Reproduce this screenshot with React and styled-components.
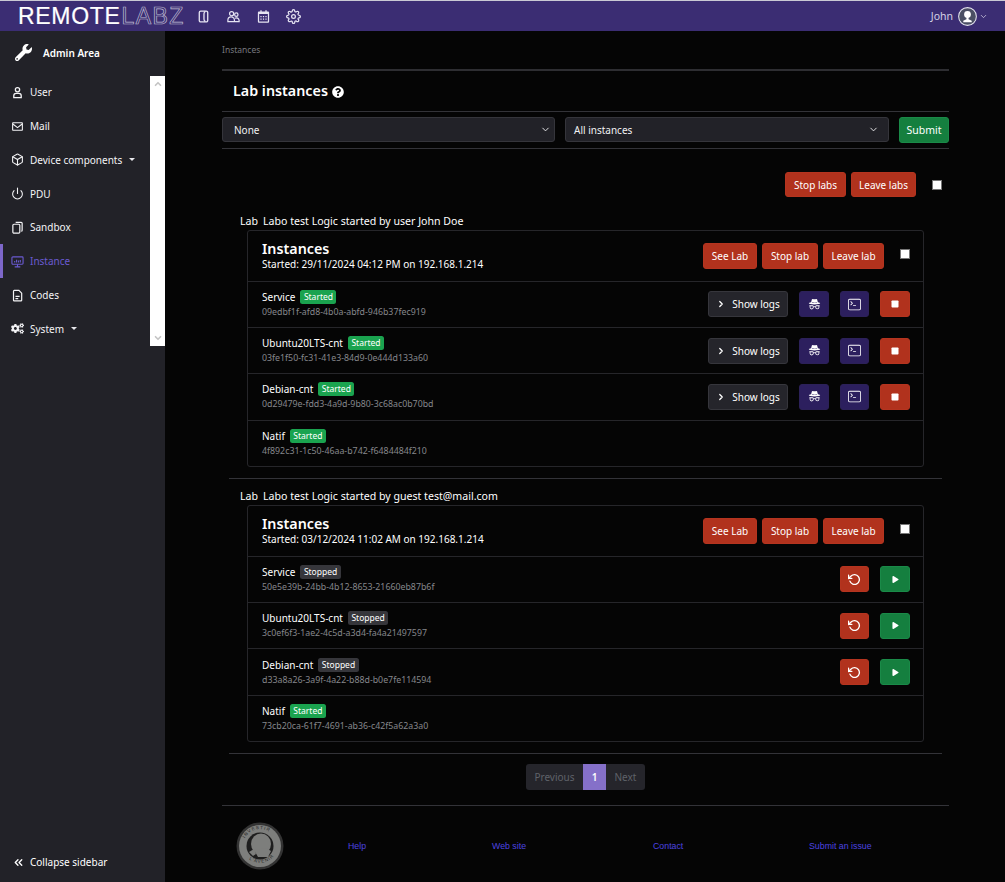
import React from "react";
import styled, { createGlobalStyle } from "styled-components";
import { BiEnvelope, BiCalendar } from "react-icons/bi";
import { FaWrench, FaQuestionCircle, FaStop, FaPlay, FaCogs } from "react-icons/fa";
import { FiChevronDown, FiChevronRight, FiChevronUp, FiChevronsLeft, FiRotateCcw, FiSettings, FiBox, FiPower } from "react-icons/fi";
import { BsIncognito, BsTerminal } from "react-icons/bs";

const GlobalStyle = createGlobalStyle`
  html, body { margin: 0; padding: 0; background: #050505; }
  body { font-family: "Noto Sans", "Open Sans", sans-serif; color: #fff; font-size: 10px; }
  * { box-sizing: border-box; }
`;

const Page = styled.div`
  width: 1005px;
  height: 882px;
  display: flex;
  flex-direction: column;
  overflow: hidden;
`;

const TopBar = styled.header`
  height: 31px;
  flex: none;
  background: #3b2d73;
  border-top: 1px solid #c9c9d4;
  display: flex;
  align-items: center;
  padding: 0 17px 0 18px;
`;

const Logo = styled.div`
  font-family: "Liberation Sans", sans-serif;
  font-size: 23px;
  line-height: 1;
  width: 164px;
  letter-spacing: 0.7px;
  white-space: nowrap;
  color: #fff;
  -webkit-text-stroke: 0.2px #fff;
`;

const LogoOutline = styled.span`
  color: transparent;
  -webkit-text-stroke: 0.7px #bdbad2;
  letter-spacing: 1.4px;
  margin-left: 1px;
`;

const TopIcons = styled.div`
  display: flex;
  align-items: center;
  gap: 15px;
  margin-left: 14px;
  color: #e6e4f2;
  font-size: 15px;
  svg { display: block; }
`;

const UserMenu = styled.div`
  margin-left: auto;
  display: flex;
  align-items: center;
  gap: 5px;
  font-size: 10.5px;
  color: #d5d2e6;
  svg:last-child { margin-left: -3px; }
`;

const Body = styled.div`
  flex: 1;
  display: flex;
  min-height: 0;
`;

const Sidebar = styled.aside`
  width: 165px;
  flex: none;
  background: #222228;
  display: flex;
  flex-direction: column;
`;

const AdminHead = styled.div`
  height: 45px;
  display: flex;
  align-items: center;
  gap: 11px;
  padding: 0 0 2px 15px;
  font-size: 10px;
  font-weight: 600;
  svg { font-size: 17px; }
`;

const NavWrap = styled.div`
  display: flex;
  height: 270px;
`;

const NavList = styled.nav`
  width: 150px;
  margin-top: -0.6px;
`;

const NavItem = styled.div`
  height: 33.8px;
  display: flex;
  align-items: center;
  gap: 6px;
  padding-left: ${(p) => (p.$active ? "8px" : "11px")};
  border-left: ${(p) => (p.$active ? "3px solid #7d67c9" : "none")};
  font-size: 10px;
  color: ${(p) => (p.$active ? "#6a5ad0" : "#f4f4f6")};
  svg { width: 13px; height: 13px; flex: none; }
`;

const Caret = styled.span`
  width: 0;
  height: 0;
  margin-left: 1px;
  border-left: 3px solid transparent;
  border-right: 3px solid transparent;
  border-top: 3px solid #e8e8ec;
`;

const ScrollTrack = styled.div`
  width: 15px;
  background: #fff;
  color: #c4c4c4;
  display: flex;
  flex-direction: column;
  justify-content: space-between;
  align-items: center;
  padding: 3px 0;
  font-size: 10px;
  svg { stroke-width: 4; }
`;

const Collapse = styled.div`
  margin-top: auto;
  height: 40px;
  display: flex;
  align-items: center;
  gap: 5px;
  padding-left: 12px;
  font-size: 10px;
  svg { font-size: 13px; stroke-width: 2.5; }
`;

const Main = styled.main`
  flex: 1;
  padding: 0 56px 0 57px;
  display: flex;
  flex-direction: column;
`;

const Crumb = styled.div`
  height: 40px;
  padding-top: 12px;
  font-size: 8.5px;
  line-height: 14px;
  color: #77797f;
  border-bottom: 2px solid #2e2e32;
`;

const Title = styled.h1`
  margin: 0;
  height: 41px;
  padding: 0 0 2px 11px;
  display: flex;
  align-items: center;
  gap: 4px;
  font-size: 14.3px;
  font-weight: 600;
  border-bottom: 1px solid #333338;
  svg { font-size: 12px; margin-top: 4px; }
`;

const FilterRow = styled.form`
  height: 37px;
  display: flex;
  align-items: center;
  gap: 10px;
  padding-bottom: 1px;
  border-bottom: 1px solid #333338;
`;

const Select = styled.div`
  width: ${(p) => p.$w}px;
  height: 25px;
  background: #222228;
  border: 1px solid #35353b;
  border-radius: 3px;
  display: flex;
  align-items: center;
  justify-content: space-between;
  padding: 0 ${(p) => p.$end}px 0 ${(p) => p.$pad}px;
  font-size: 10px;
  color: #f1f1f3;
`;

const Btn = styled.button`
  font-family: inherit;
  height: ${(p) => p.$h || 26}px;
  padding: 0;
  width: ${(p) => p.$w}px;
  font-size: ${(p) => p.$fs || 10}px;
  color: #fff;
  border-radius: 3px;
  border: 1px solid ${(p) => ({ red: "#b5341f", green: "#1a8a48", purple: "#2c2159", dark: "#36363c" }[p.$kind])};
  background: ${(p) => ({ red: "#b1321d", green: "#157f3f", purple: "#2c1f5e", dark: "#25252b" }[p.$kind])};
  display: flex;
  align-items: center;
  justify-content: center;
  gap: 6px;
  white-space: nowrap;
`;

const Check = styled.span`
  width: 10px;
  height: 10px;
  background: #fff;
  border: 1px solid #777;
  flex: none;
  display: block;
`;

const BulkRow = styled.div`
  margin-top: 23px;
  display: flex;
  justify-content: flex-end;
  align-items: center;
  padding-right: 7px;
  gap: 5px;
`;

const BulkCheck = styled(Check)`
  margin-left: 11px;
`;

const LabBlock = styled.section`
  margin: ${(p) => p.$top}px 7px 0;
  padding-bottom: 11px;
  border-bottom: 1px solid #333338;
`;

const LabName = styled.div`
  padding-left: 11px;
  height: 15px;
  line-height: 15px;
  font-size: 10.6px;
  white-space: nowrap;
  span { margin-right: 5px; }
`;

const Card = styled.div`
  margin: 1px 18px 0;
  border: 1px solid #26262a;
  border-radius: 3px;
`;

const CardHead = styled.div`
  height: 49.5px;
  display: flex;
  align-items: center;
  justify-content: space-between;
  padding: 0 13px 0 14px;
`;

const CardTitle = styled.div`
  font-size: 14.3px;
  line-height: 17px;
  font-weight: 600;
`;

const CardSub = styled.div`
  font-size: 10px;
  line-height: 15px;
`;

const HeadActions = styled.div`
  display: flex;
  align-items: center;
  gap: 5px;
  ${Check} { margin-left: 11px; margin-top: -3px; }
`;

const Row = styled.div`
  height: 46.4px;
  border-top: 1px solid #26262a;
  display: flex;
  align-items: center;
  justify-content: space-between;
  padding: 0 13px 0 14px;
`;

const RowName = styled.div`
  display: flex;
  align-items: center;
  gap: 5px;
  font-size: 10px;
  line-height: 14px;
`;

const Badge = styled.span`
  font-size: 8.5px;
  line-height: 13px;
  height: 14px;
  padding: 0 3.5px;
  border-radius: 2.5px;
  background: ${(p) => (p.$on ? "#1aa34f" : "#36363b")};
  color: #fff;
`;

const Uuid = styled.div`
  font-size: 8.8px;
  line-height: 13px;
  color: #85878c;
  margin-top: 2px;
`;

const RowActions = styled.div`
  display: flex;
  gap: 11px;
  align-items: center;
  svg { display: block; }
`;

const Pager = styled.div`
  margin: 10px auto 0;
  display: flex;
  height: 26px;
  width: 119px;
  border-radius: 3px;
  overflow: hidden;
  background: #25252b;
  font-size: 10px;
`;

const PageCell = styled.div`
  display: flex;
  align-items: center;
  justify-content: center;
  width: ${(p) => p.$w}px;
  color: ${(p) => (p.$active ? "#fff" : "#5f6269")};
  background: ${(p) => (p.$active ? "#8570c9" : "transparent")};
  font-weight: ${(p) => (p.$active ? 600 : 400)};
`;

const Footer = styled.footer`
  margin-top: 15px;
  border-top: 1px solid #333338;
  flex: 1;
  display: grid;
  grid-template-columns: 126px 144px 161px 156px auto;
  align-items: center;
  font-family: "Liberation Sans", sans-serif;
  font-size: 8.8px;
  color: #4c44e0;
  padding-top: 3px;
`;

const Medal = styled.svg`
  margin-left: 14px;
  display: block;
`;

const Door = () => (
  <svg width="15" height="15" viewBox="0 0 16 16" fill="none" stroke="currentColor" strokeWidth="1.4">
    <path d="M5 2.2h6a1.5 1.5 0 0 1 1.5 1.5v8.6a1.5 1.5 0 0 1-1.5 1.5H5a1.5 1.5 0 0 1-1.5-1.5V3.7A1.5 1.5 0 0 1 5 2.2z" />
    <path d="M10 2.5c-1 .8-1.5 1.5-1.5 2.5v6c0 1 .5 1.800 1.500 2.500" />
  </svg>
);

const People = () => (
  <svg width="15" height="15" viewBox="0 0 16 16" fill="none" stroke="currentColor" strokeWidth="1.3">
    <circle cx="6" cy="5" r="2.2" />
    <circle cx="11" cy="6" r="1.8" />
    <path d="M2 13.5v-1.5a3.5 3.5 0 0 1 7 0v1.5zM9.5 13.5H14v-1.3a3 3 0 0 0-4.5-2.4" />
  </svg>
);

const Avatar = () => (
  <svg width="19" height="19" viewBox="0 0 18 18">
    <circle cx="9" cy="9" r="8.4" fill="#4a4f63" stroke="#e4e4ee" strokeWidth="1" />
    <circle cx="9" cy="7" r="3.2" fill="#fff" />
    <path d="M8 9.5h2v2l3 1.6v1.4H5v-1.4l3-1.6z" fill="#fff" />
  </svg>
);

const PersonIcon = () => (
  <svg viewBox="0 0 14 14" fill="none" stroke="currentColor" strokeWidth="1.4">
    <circle cx="7" cy="4" r="2.3" />
    <path d="M3 12.5v-2A2.5 2.5 0 0 1 5.5 8h3a2.5 2.5 0 0 1 2.5 2.5v2z" />
  </svg>
);

const CopyIcon = () => (
  <svg viewBox="0 0 14 14" fill="none" stroke="currentColor" strokeWidth="1.3">
    <path d="M5 1.5h6a1 1 0 0 1 1 1V10a1 1 0 0 1-1 1" />
    <rect x="2" y="3.5" width="7.5" height="9.500" rx="1.2" />
  </svg>
);

const ScreenIcon = () => (
  <svg viewBox="0 0 14 14" fill="none" stroke="currentColor" strokeWidth="1.2">
    <rect x="1" y="2" width="12" height="8" rx="1" />
    <path d="M7 10v2.5M4 12.800h6M4 8V6.5M6 8V5M8 8V6M10 8V5.5" />
  </svg>
);

const FileIcon = () => (
  <svg viewBox="0 0 14 14" fill="none" stroke="currentColor" strokeWidth="1.3">
    <path d="M3.5 1.5h5l3 3V12a.8.8 0 0 1-.8.8H3.5a.8.8 0 0 1-.8-.8V2.3a.8.8 0 0 1 .8-.8z" />
    <path d="M4.8 8h4.5M4.8 10.3h3" />
  </svg>
);

const MedalIcon = () => (
  <Medal width="48" height="48" viewBox="0 0 48 48">
    <circle cx="24" cy="24" r="23.5" fill="#333" />
    <circle cx="24" cy="24" r="21" fill="#7d7e7c" />
    <circle cx="24" cy="24" r="13.5" fill="#1e1e1e" />
    <ellipse cx="25" cy="22" rx="10" ry="10.500" fill="#7d7e7c" />
    <path d="M18 28l12-2 5 3-3 6H22z" fill="#7d7e7c" />
    <path d="M13 30l5-3 2 5-3 2z" fill="#7d7e7c" />
    <path id="medal-top" d="M7 24a17 17 0 0 1 34 0" fill="none" />
    <path id="medal-bottom" d="M8 31a18 18 0 0 0 32 0" fill="none" />
    <text fontSize="4.5" fill="#262626" fontFamily="Liberation Sans" letterSpacing="1">
      <textPath href="#medal-top" startOffset="8">INVESTIR</textPath>
    </text>
    <text fontSize="4.5" fill="#262626" fontFamily="Liberation Sans" letterSpacing="1">
      <textPath href="#medal-bottom" startOffset="8">L'AVENIR</textPath>
    </text>
  </Medal>
);

const navItems = [
  { icon: <PersonIcon />, label: "User" },
  { icon: <BiEnvelope />, label: "Mail" },
  { icon: <FiBox />, label: "Device components", caret: true },
  { icon: <FiPower />, label: "PDU" },
  { icon: <CopyIcon />, label: "Sandbox" },
  { icon: <ScreenIcon />, label: "Instance", active: true },
  { icon: <FileIcon />, label: "Codes" },
  { icon: <FaCogs />, label: "System", caret: true },
];

const labs = [
  {
    top: 17,
    owner: "Labo test Logic started by user John Doe",
    started: "Started: 29/11/2024 04:12 PM on 192.168.1.214",
    rows: [
      { name: "Service", id: "09edbf1f-afd8-4b0a-abfd-946b37fec919", on: true, mode: "running" },
      { name: "Ubuntu20LTS-cnt", id: "03fe1f50-fc31-41e3-84d9-0e444d133a60", on: true, mode: "running" },
      { name: "Debian-cnt", id: "0d29479e-fdd3-4a9d-9b80-3c68ac0b70bd", on: true, mode: "running" },
      { name: "Natif", id: "4f892c31-1c50-46aa-b742-f6484484f210", on: true },
    ],
  },
  {
    top: 10,
    owner: "Labo test Logic started by guest test@mail.com",
    started: "Started: 03/12/2024 11:02 AM on 192.168.1.214",
    rows: [
      { name: "Service", id: "50e5e39b-24bb-4b12-8653-21660eb87b6f", mode: "stopped" },
      { name: "Ubuntu20LTS-cnt", id: "3c0ef6f3-1ae2-4c5d-a3d4-fa4a21497597", mode: "stopped" },
      { name: "Debian-cnt", id: "d33a8a26-3a9f-4a22-b88d-b0e7fe114594", mode: "stopped" },
      { name: "Natif", id: "73cb20ca-61f7-4691-ab36-c42f5a62a3a0", on: true },
    ],
  },
];

const RowButtons = ({ mode }) => {
  if (mode === "running") {
    return (
      <RowActions>
        <Btn $kind="dark" $w={80}><FiChevronRight size={10} strokeWidth={3} />Show logs</Btn>
        <Btn $kind="purple" $w={30}><BsIncognito size={13} /></Btn>
        <Btn $kind="purple" $w={29}><BsTerminal size={13} /></Btn>
        <Btn $kind="red" $w={30}><FaStop size={8} /></Btn>
      </RowActions>
    );
  }
  if (mode === "stopped") {
    return (
      <RowActions>
        <Btn $kind="red" $w={29}><FiRotateCcw size={13} strokeWidth={2.5} /></Btn>
        <Btn $kind="green" $w={30}><FaPlay size={7} /></Btn>
      </RowActions>
    );
  }
  return null;
};

export default function App() {
  return (
    <Page>
      <GlobalStyle />
      <TopBar>
        <Logo>REMOTE<LogoOutline>LABZ</LogoOutline></Logo>
        <TopIcons>
          <Door />
          <People />
          <BiCalendar />
          <FiSettings />
        </TopIcons>
        <UserMenu>
          John
          <Avatar />
          <FiChevronDown size={9} />
        </UserMenu>
      </TopBar>
      <Body>
        <Sidebar>
          <AdminHead><FaWrench />Admin Area</AdminHead>
          <NavWrap>
            <NavList>
              {navItems.map((item) => (
                <NavItem key={item.label} $active={item.active}>
                  {item.icon}
                  {item.label}
                  {item.caret && <Caret />}
                </NavItem>
              ))}
            </NavList>
            <ScrollTrack><FiChevronUp /><FiChevronDown /></ScrollTrack>
          </NavWrap>
          <Collapse><FiChevronsLeft />Collapse sidebar</Collapse>
        </Sidebar>
        <Main>
          <Crumb>Instances</Crumb>
          <Title>Lab instances <FaQuestionCircle /></Title>
          <FilterRow>
            <Select $w={333} $pad={11} $end={3}>None<FiChevronDown size={11} /></Select>
            <Select $w={324} $pad={8} $end={9}>All instances<FiChevronDown size={11} /></Select>
            <Btn $kind="green" $w={50} $fs={10.5}>Submit</Btn>
          </FilterRow>
          <BulkRow>
            <Btn $kind="red" $w={61} $h={25}>Stop labs</Btn>
            <Btn $kind="red" $w={65} $h={25}>Leave labs</Btn>
            <BulkCheck />
          </BulkRow>
          {labs.map((lab) => (
            <LabBlock key={lab.started} $top={lab.top}>
              <LabName><span>Lab</span>{lab.owner}</LabName>
              <Card>
                <CardHead>
                  <div>
                    <CardTitle>Instances</CardTitle>
                    <CardSub>{lab.started}</CardSub>
                  </div>
                  <HeadActions>
                    <Btn $kind="red" $w={54}>See Lab</Btn>
                    <Btn $kind="red" $w={56}>Stop lab</Btn>
                    <Btn $kind="red" $w={61}>Leave lab</Btn>
                    <Check />
                  </HeadActions>
                </CardHead>
                {lab.rows.map((row) => (
                  <Row key={row.id}>
                    <div>
                      <RowName>
                        {row.name}
                        <Badge $on={row.on}>{row.on ? "Started" : "Stopped"}</Badge>
                      </RowName>
                      <Uuid>{row.id}</Uuid>
                    </div>
                    <RowButtons mode={row.mode} />
                  </Row>
                ))}
              </Card>
            </LabBlock>
          ))}
          <Pager>
            <PageCell $w={57}>Previous</PageCell>
            <PageCell $w={23} $active>1</PageCell>
            <PageCell $w={39}>Next</PageCell>
          </Pager>
          <Footer>
            <MedalIcon />
            <span>Help</span>
            <span>Web site</span>
            <span>Contact</span>
            <span>Submit an issue</span>
          </Footer>
        </Main>
      </Body>
    </Page>
  );
}
